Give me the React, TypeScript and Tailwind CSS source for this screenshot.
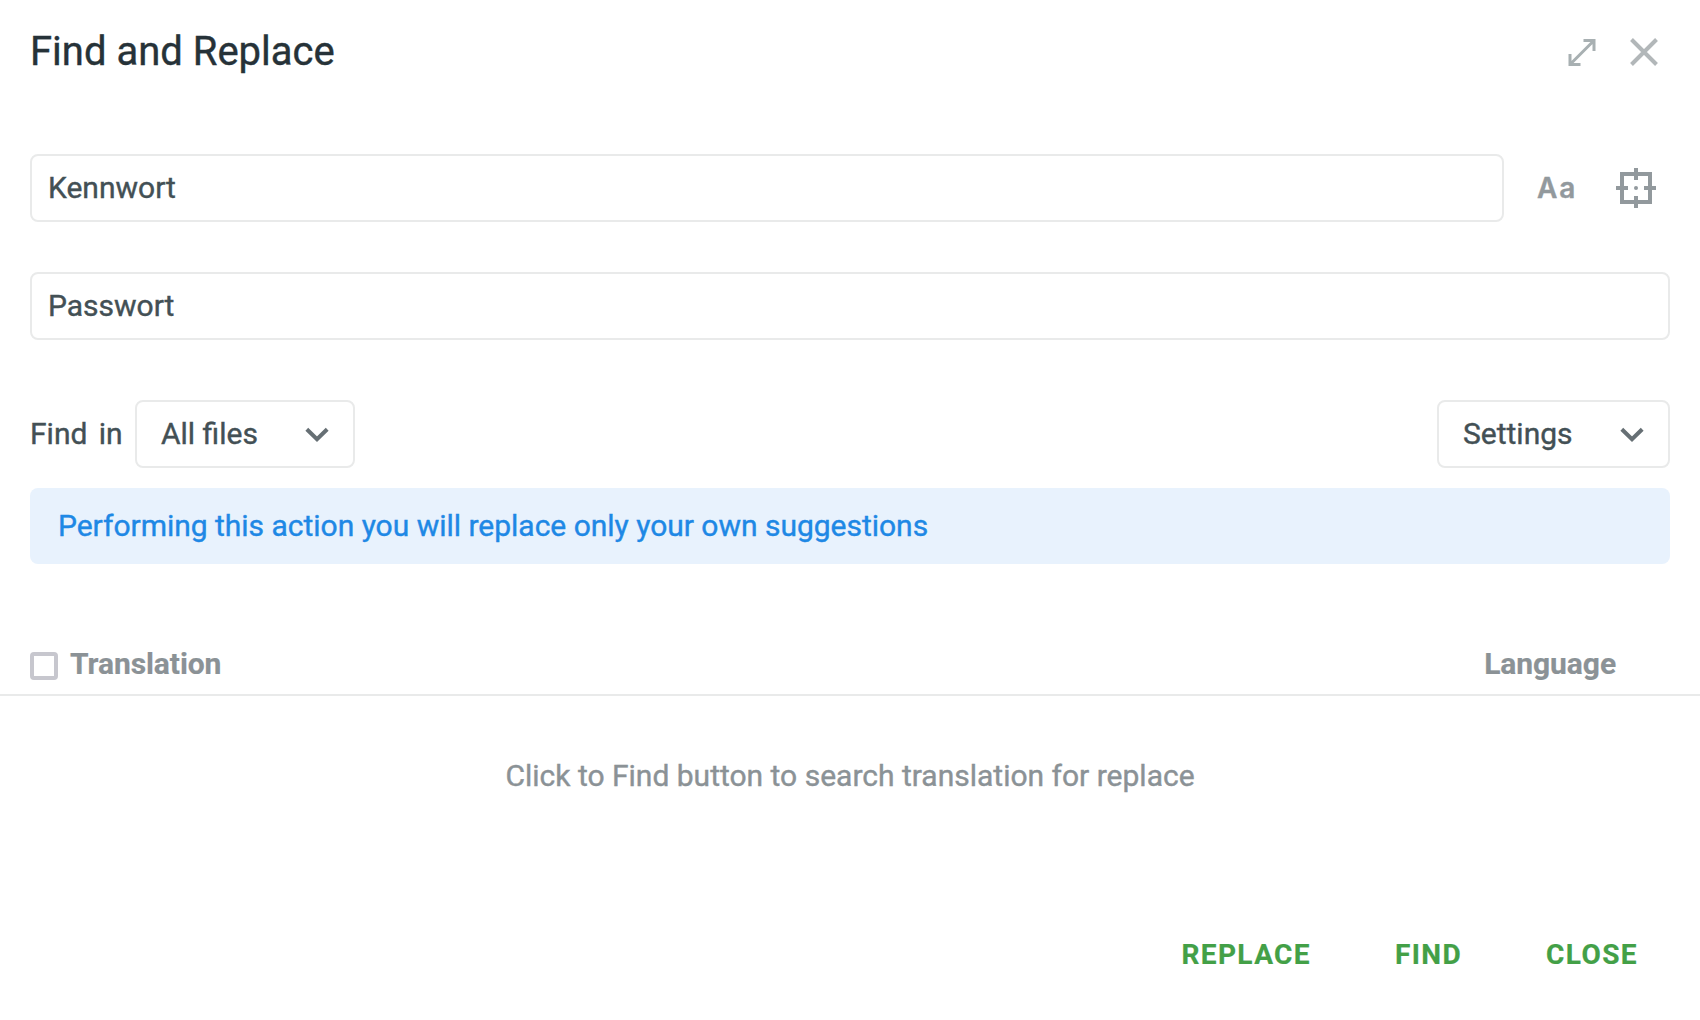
import React from "react";

function Chevron() {
  return (
    <svg className="mt-0.5" width="24" height="16" viewBox="0 0 24 16" fill="none" stroke="#666f74" strokeWidth="4">
      <path d="M1.8 2.3 12 12.2 22.2 2.3" />
    </svg>
  );
}

function Select({ label, className }: { label: string; className: string }) {
  return (
    <button className={`flex h-[68px] items-center justify-between rounded-lg border-2 border-[#e9eaea] bg-white pl-6 pr-6 ${className}`}>
      <span>{label}</span>
      <Chevron />
    </button>
  );
}

const inputClass =
  "block h-[68px] rounded-lg border-2 border-[#e9eaea] bg-white px-4 pb-0.5 text-[30px] text-[#435055] outline-none";

export default function App() {
  return (
    <div className="flex h-[1020px] w-[1700px] flex-col overflow-hidden bg-white font-['Roboto',sans-serif] text-[30px] leading-9 text-[#435055] [-webkit-text-stroke:0.4px_currentColor]">
      <header className="flex h-[102px] items-center justify-between pl-[30px] pr-[42px]">
        <h1 className="mt-0.5 text-[40px] leading-[48px] text-[#263238]">Find and Replace</h1>
        <div className="flex items-center gap-[34px]">
          <button className="mt-0.5">
            <svg width="28" height="28" viewBox="0 0 28 28" fill="none" stroke="#a8b0b2" strokeWidth="3">
              <path d="M15.5 2.5h10.5v10.5M2 16v10.5h10.5M25.5 3 2.5 26" />
            </svg>
          </button>
          <button className="mt-0.5">
            <svg width="28" height="28" viewBox="0 0 28 28" fill="none" stroke="#b2b7b9" strokeWidth="4">
              <path d="M1.5 1.5 26.5 26.5M26.5 1.5 1.5 26.5" />
            </svg>
          </button>
        </div>
      </header>

      <main className="mt-[52px] flex flex-col">
        <div className="flex items-center pl-[30px] pr-11">
          <input className={`${inputClass} w-[1474px]`} defaultValue="Kennwort" />
          <button className="ml-[33px] w-[81px] text-left font-['Inter',sans-serif] text-[28px] font-semibold tracking-[2px] text-[#92999d] [-webkit-text-stroke:0.4px_currentColor]">
            Aa
          </button>
          <button className="-ml-0.5">
            <svg width="40" height="40" viewBox="0 0 40 40" fill="none" stroke="#92999d" strokeWidth="4">
              <path d="M6 6h28v28H6zM20 0v12M20 28v12M0 20h12M28 20h12" />
              <circle cx="20" cy="20" r="2" fill="#92999d" stroke="none" />
            </svg>
          </button>
        </div>
        <div className="mt-[50px] px-[30px]">
          <input className={`${inputClass} w-full`} defaultValue="Passwort" />
        </div>
        <div className="mt-[60px] flex items-center justify-between px-[30px]">
          <div className="flex items-center">
            <span className="w-[105px] [word-spacing:4px]">Find in</span>
            <Select label="All files" className="w-[220px]" />
          </div>
          <Select label="Settings" className="w-[233px]" />
        </div>
        <div className="mx-[30px] mt-5 flex h-[76px] items-center rounded-lg bg-[#e8f2fd] px-7 tracking-[-0.015px] text-[#1e88e5]">
          Performing this action you will replace only your own suggestions
        </div>
        <div className="mt-[78px] flex h-[54px] items-start justify-between border-b-2 border-[#e9eaea] pl-[30px] pr-[84px] font-bold tracking-[-0.08px] text-[#8b9296] [-webkit-text-stroke:0.2px_currentColor]">
          <div className="flex">
            <span className="mr-3 mt-2.5 h-7 w-7 rounded border-4 border-[#c7c7ce]" />
            <span className="mt-1">Translation</span>
          </div>
          <span className="mt-1">Language</span>
        </div>
        <p className="mt-[62px] text-center text-[#8b9296]">
          Click to Find button to search translation for replace
        </p>
      </main>

      <footer className="mt-[143px] flex justify-end gap-[84px] pr-[62px] text-[28px] font-bold tracking-[1.4px] text-[#43a047] [-webkit-text-stroke:0.2px_currentColor]">
        <button>REPLACE</button>
        <button>FIND</button>
        <button>CLOSE</button>
      </footer>
    </div>
  );
}
